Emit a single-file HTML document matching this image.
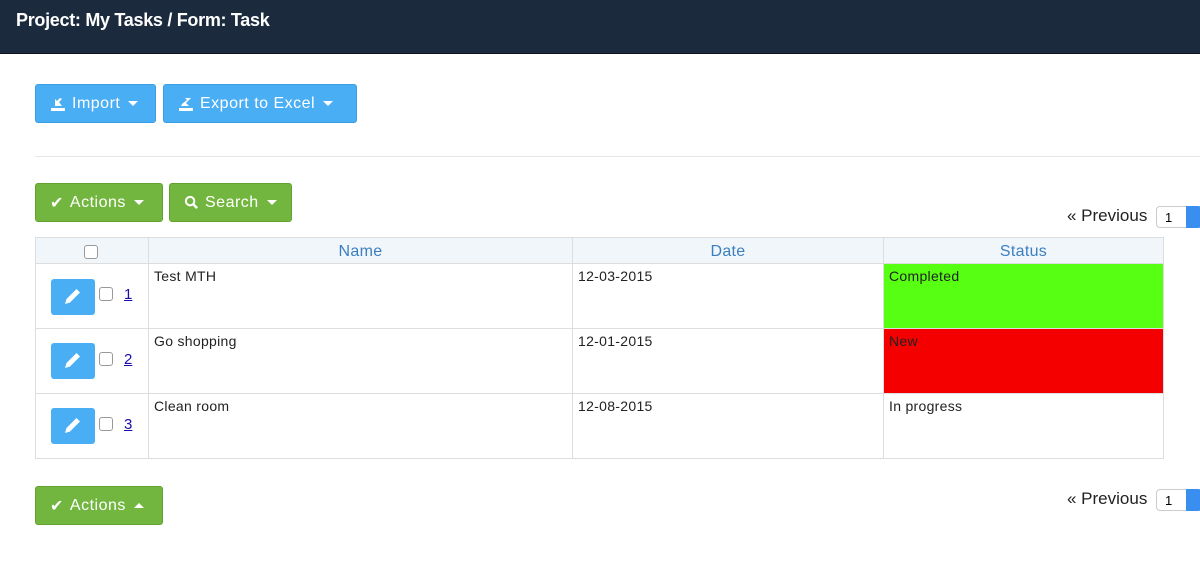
<!DOCTYPE html>
<html><head><meta charset="utf-8"><style>
*{box-sizing:border-box;margin:0;padding:0}
body{width:1200px;height:566px;overflow:hidden;background:#fff;font-family:"Liberation Sans",sans-serif;position:relative}
.hdr{position:absolute;left:0;top:0;width:1200px;height:54px;background:#1b2b3d;border-bottom:1px solid #0d1620}
.hdr span{position:absolute;left:16px;top:10px;color:#fff;font-size:18px;font-weight:bold;letter-spacing:-0.3px}
.btn{position:absolute;height:39px;border-radius:3px;color:#fff;font-size:16px;letter-spacing:0.5px;display:flex;align-items:center;padding-left:14px}
.blue{background:#4aaef4;border:1px solid #3a9ee4}
.green{background:#72b63f;border:1px solid #62a330}
.caret{display:inline-block;width:0;height:0;border-left:5px solid transparent;border-right:5px solid transparent;border-top:5px solid #fff;margin-left:8px}
.up{border-top:none;border-bottom:5px solid #fff}
.hr{position:absolute;left:35px;top:156px;width:1165px;height:1px;background:#e6e6e6}
.cell{position:absolute;border-right:1px solid #ddd;border-bottom:1px solid #ddd;font-size:14px;color:#222;padding:4px 5px;letter-spacing:0.3px}
.th{background:#f1f6fb;color:#3b7fc0;font-size:16px;text-align:center;padding-top:5px}
.cb{position:absolute;width:14px;height:14px;border:1px solid #999;border-radius:3px;background:#fff}
.ed{position:absolute;left:51px;width:44px;height:36px;background:#4aaef4;border-radius:3px}
.num{position:absolute;left:124px;color:#1a0dab;text-decoration:underline;font-size:15px}
.prev{position:absolute;font-size:17px;color:#222}
.sel{position:absolute;width:46px;height:22px;border:1px solid #ccc;border-radius:4px;background:#fff;font-size:13px;padding:3px 8px}
.sel i{position:absolute;right:-1px;top:-1px;width:16px;height:22px;background:#3a8ef0;border-radius:0 4px 4px 0}
</style></head><body>
<div class="hdr"><span>Project: My Tasks / Form: Task</span></div>
<div class="btn blue" style="left:35px;top:84px;width:121px"><svg width="16" height="16" viewBox="0 0 16 16" style="margin-right:6px"><rect x="1" y="12" width="14" height="3" fill="#fff"/><path d="M3 10h9l-3-4 3-3-2-1-3 3-2-2v7z" fill="#fff"/></svg>Import<i class="caret"></i></div>
<div class="btn blue" style="left:163px;top:84px;width:194px"><svg width="16" height="16" viewBox="0 0 16 16" style="margin-right:6px"><rect x="1" y="12" width="14" height="3" fill="#fff"/><path d="M3 10h8l-3-3 5-5h-6l2 2-5 4z" fill="#fff"/></svg>Export to Excel<i class="caret"></i></div>
<div class="hr"></div>
<div class="btn green" style="left:35px;top:183px;width:128px"><span style="margin-right:6px">✔</span>Actions<i class="caret"></i></div>
<div class="btn green" style="left:169px;top:183px;width:123px"><svg width="15" height="15" viewBox="0 0 16 16" style="margin-right:6px"><circle cx="6.5" cy="6.5" r="4.5" stroke="#fff" stroke-width="2.2" fill="none"/><path d="M10 10l4 4" stroke="#fff" stroke-width="2.6"/></svg>Search<i class="caret"></i></div>
<div class="prev" style="left:1067px;top:206px">« Previous</div>
<div class="sel" style="left:1156px;top:206px">1<i></i></div>
<div class="cell th" style="left:35px;top:237px;width:114px;height:27px;border-left:1px solid #ddd;border-top:1px solid #ddd"></div>
<div class="cb" style="left:84px;top:245px"></div>
<div class="cell th" style="left:149px;top:237px;width:424px;height:27px;border-top:1px solid #ddd">Name</div>
<div class="cell th" style="left:573px;top:237px;width:311px;height:27px;border-top:1px solid #ddd">Date</div>
<div class="cell th" style="left:884px;top:237px;width:280px;height:27px;border-top:1px solid #ddd">Status</div>

<div class="cell" style="left:35px;top:264px;width:114px;height:65px;border-left:1px solid #ddd"></div>
<div class="cell" style="left:149px;top:264px;width:424px;height:65px">Test MTH</div>
<div class="cell" style="left:573px;top:264px;width:311px;height:65px">12-03-2015</div>
<div class="cell" style="left:884px;top:264px;width:280px;height:65px;background:#57ff12">Completed</div>
<div class="cell" style="left:35px;top:329px;width:114px;height:65px;border-left:1px solid #ddd"></div>
<div class="cell" style="left:149px;top:329px;width:424px;height:65px">Go shopping</div>
<div class="cell" style="left:573px;top:329px;width:311px;height:65px">12-01-2015</div>
<div class="cell" style="left:884px;top:329px;width:280px;height:65px;background:#f50000">New</div>
<div class="cell" style="left:35px;top:394px;width:114px;height:65px;border-left:1px solid #ddd"></div>
<div class="cell" style="left:149px;top:394px;width:424px;height:65px">Clean room</div>
<div class="cell" style="left:573px;top:394px;width:311px;height:65px">12-08-2015</div>
<div class="cell" style="left:884px;top:394px;width:280px;height:65px">In progress</div>

<div class="ed" style="top:279px"><svg width="44" height="36" viewBox="0 0 44 36"><path d="M14 25l1.5-5 10-10 3.5 3.5-10 10z" fill="#fff"/></svg></div>
<div class="cb" style="left:99px;top:287px"></div><div class="num" style="top:286px">1</div>
<div class="ed" style="top:343px"><svg width="44" height="36" viewBox="0 0 44 36"><path d="M14 25l1.5-5 10-10 3.5 3.5-10 10z" fill="#fff"/></svg></div>
<div class="cb" style="left:99px;top:352px"></div><div class="num" style="top:351px">2</div>
<div class="ed" style="top:408px"><svg width="44" height="36" viewBox="0 0 44 36"><path d="M14 25l1.5-5 10-10 3.5 3.5-10 10z" fill="#fff"/></svg></div>
<div class="cb" style="left:99px;top:417px"></div><div class="num" style="top:416px">3</div>

<div class="btn green" style="left:35px;top:486px;width:128px"><span style="margin-right:6px">✔</span>Actions<i class="caret up"></i></div>
<div class="prev" style="left:1067px;top:489px">« Previous</div>
<div class="sel" style="left:1156px;top:489px">1<i></i></div>
</body></html>
